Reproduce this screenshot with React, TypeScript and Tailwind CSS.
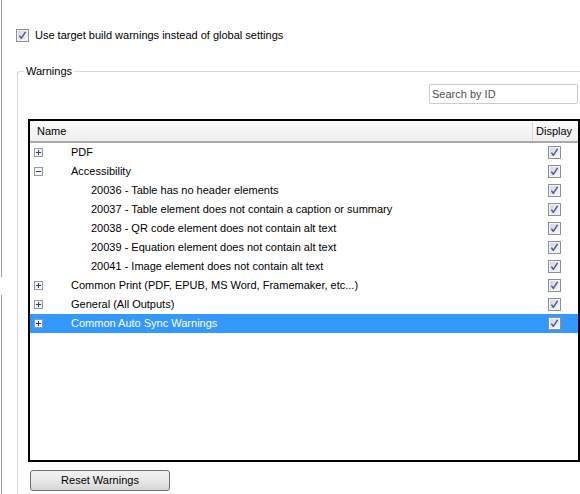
import React from "react";

const font = { fontFamily: '"Liberation Sans", Arial, sans-serif' };

function Check() {
  return (
    <svg width="13" height="13" viewBox="0 0 13 13" className="block">
      <defs>
        <linearGradient id="cbg" x1="0" y1="0" x2="1" y2="1">
          <stop offset="0" stopColor="#d3d7de" />
          <stop offset="1" stopColor="#f4f5f7" />
        </linearGradient>
      </defs>
      <rect x="0.5" y="0.5" width="12" height="12" fill="#f4f4f4" stroke="#8e8f8f" />
      <rect x="2" y="2" width="9" height="9" fill="url(#cbg)" />
      <path d="M3.4 6.6 L5.3 9.3 L9.6 2.8" fill="none" stroke="#4a5c9c" strokeWidth="1.5" strokeLinejoin="round" />
    </svg>
  );
}

function Expander({ open }: { open?: boolean }) {
  return (
    <svg width="9" height="9" viewBox="0 0 9 9" className="block">
      <rect x="0.5" y="0.5" width="8" height="8" fill="#f6f6f6" stroke="#8f9aa6" />
      <path d="M2 4.5 H7" stroke="#2c3e6a" strokeWidth="1" />
      {!open && <path d="M4.5 2 V7" stroke="#2c3e6a" strokeWidth="1" />}
    </svg>
  );
}

type Row = { label: string; level: 0 | 1; open?: boolean; selected?: boolean };

const rows: Row[] = [
  { label: "PDF", level: 0 },
  { label: "Accessibility", level: 0, open: true },
  { label: "20036 - Table has no header elements", level: 1 },
  { label: "20037 - Table element does not contain a caption or summary", level: 1 },
  { label: "20038 - QR code element does not contain alt text", level: 1 },
  { label: "20039 - Equation element does not contain alt text", level: 1 },
  { label: "20041 - Image element does not contain alt text", level: 1 },
  { label: "Common Print (PDF, EPUB, MS Word, Framemaker, etc...)", level: 0 },
  { label: "General (All Outputs)", level: 0 },
  { label: "Common Auto Sync Warnings", level: 0, selected: true },
];

export default function App() {
  return (
    <div className="relative w-[580px] h-[494px] overflow-hidden bg-white text-[11px] text-black" style={font}>
      {/* window edge */}
      <div className="absolute left-[1px] top-0 h-[277px] w-[1px] bg-[#a0a0a0]" />
      <div className="absolute left-[1px] top-[295px] h-[199px] w-[1px] bg-[#a0a0a0]" />

      <div className="pt-[29px] pl-[16px] flex items-start gap-[6px] h-[71px]">
        <Check />
        <span className="leading-[13px]">Use target build warnings instead of global settings</span>
      </div>

      {/* group box */}
      <div className="relative ml-[17px] w-[600px] h-[440px] border-t border-l border-[#d5d9de] rounded-tl-[3px]">
        <span className="absolute left-[6px] top-[-7px] bg-white px-[2px] leading-[13px]">Warnings</span>

        <div className="flex justify-start pl-[411px] pt-[12px]">
          <div className="w-[149px] h-[20px] border border-[#c9cbcf] rounded-[2px] flex items-center pl-[2px] text-[#505050]">
            Search by ID
          </div>
        </div>

        <div className="ml-[10px] mt-[15px] w-[552px] h-[343px] border-2 border-black flex flex-col">
          <div className="h-[22px] flex border-b-2 border-[#a9a9a9] bg-gradient-to-b from-[#fbfbfb] to-[#eeeeee]">
            <div className="flex-1 pl-[7px] flex items-center">Name</div>
            <div className="w-[46px] border-l border-[#d8d8d8] flex items-center pl-[3px]">Display</div>
          </div>
          <div className="pt-[0px] flex flex-col">
            {rows.map((r, i) => (
              <div
                key={i}
                className={
                  "h-[19px] flex items-center " + (r.selected ? "bg-[#3399ff] text-white" : "")
                }
              >
                <div className="w-[41px] pl-[4px] flex items-center">
                  {r.level === 0 && <Expander open={r.open} />}
                </div>
                <div className={"flex-1 " + (r.level === 1 ? "pl-[20px]" : "")}>{r.label}</div>
                <div className="w-[46px] flex justify-center pr-[1px]">
                  <Check />
                </div>
              </div>
            ))}
          </div>
        </div>

        <div className="ml-[12px] mt-[8px] w-[140px] h-[21px] rounded-[3px] border border-[#707070] bg-gradient-to-b from-[#f2f2f2] via-[#e8e8e8] to-[#d6d6d6] flex items-center justify-center">
          Reset Warnings
        </div>
      </div>
    </div>
  );
}
